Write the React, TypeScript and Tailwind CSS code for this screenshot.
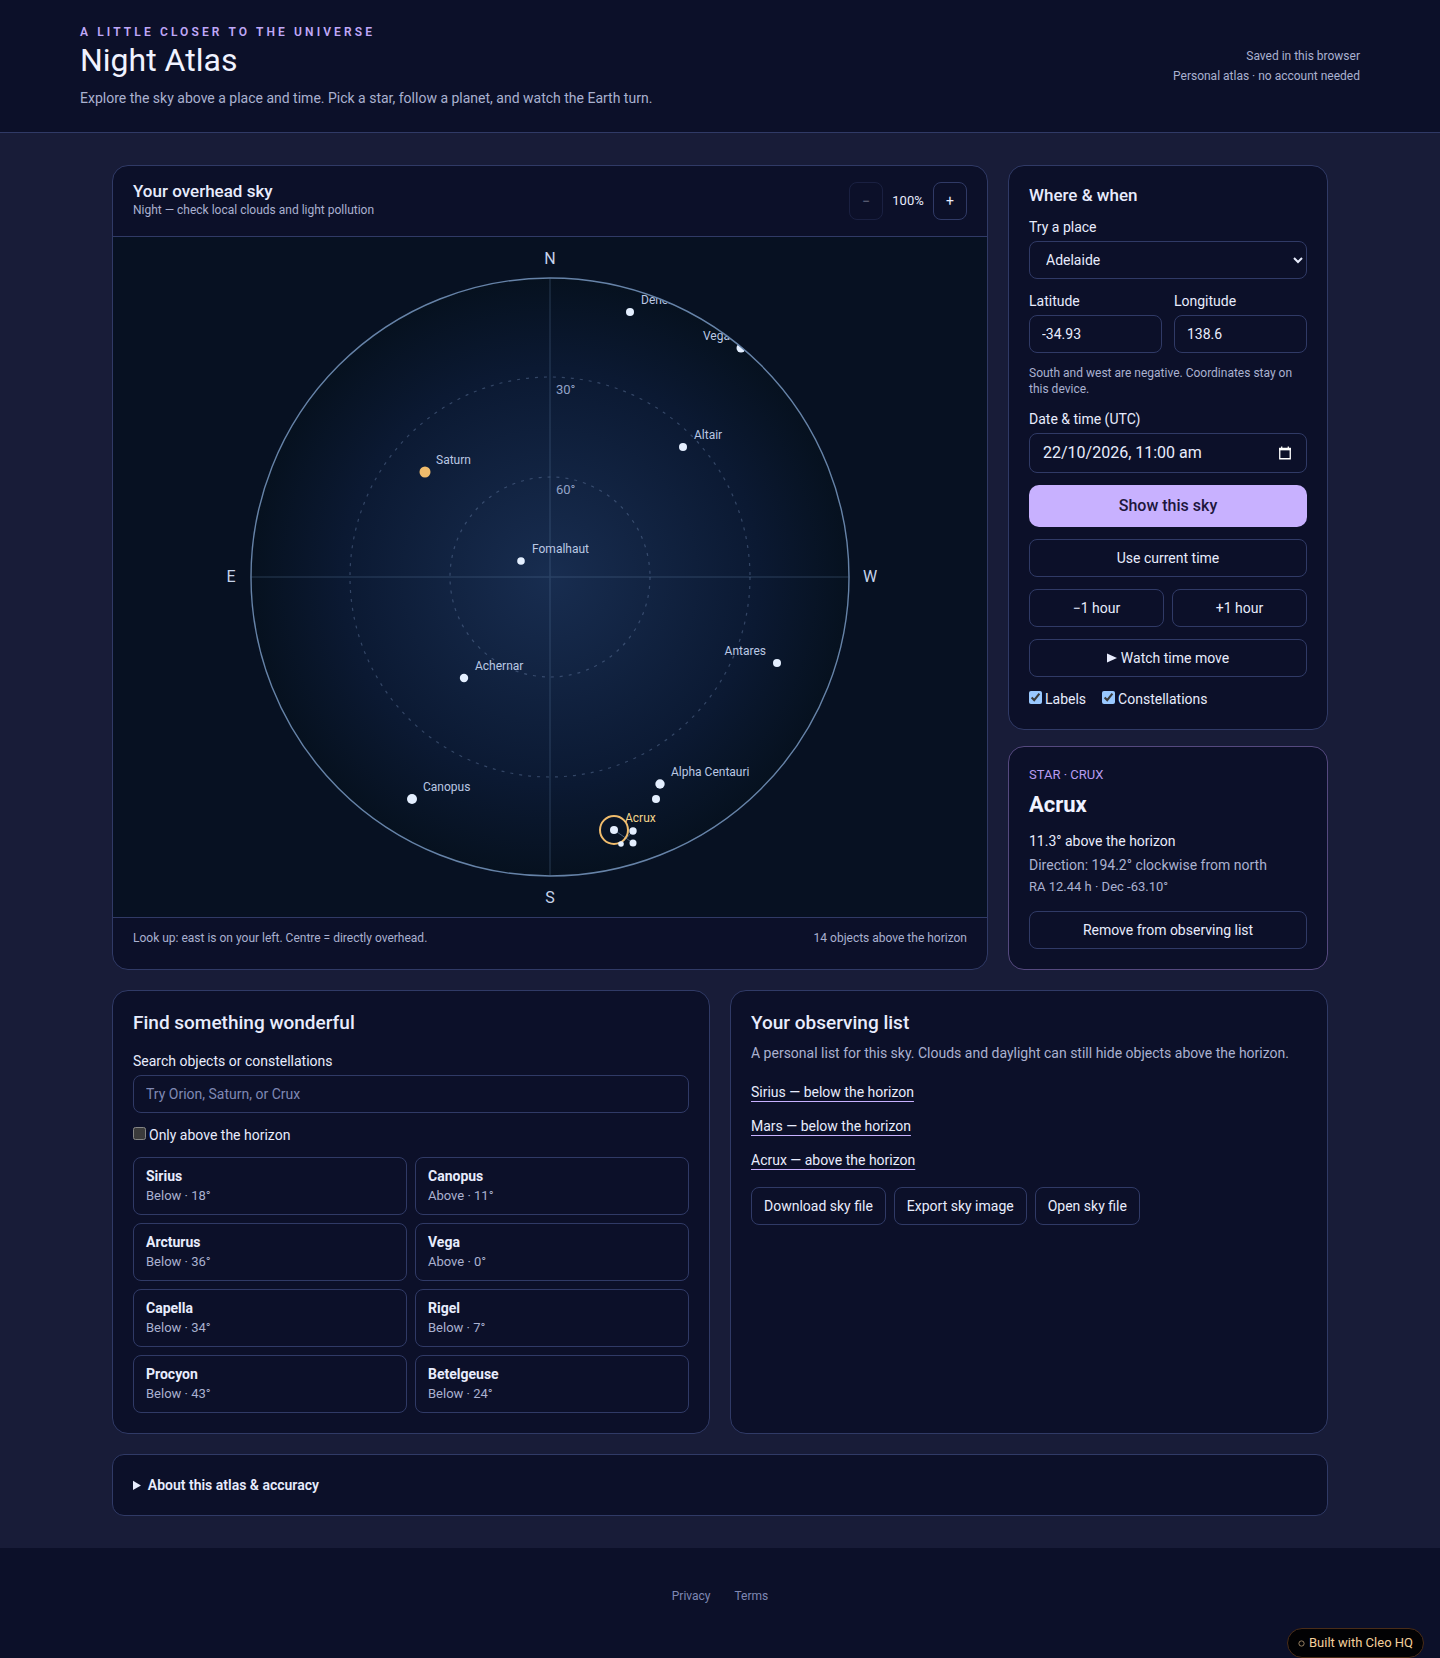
import React, { useState } from "react";

const button =
  "rounded-lg border border-[#303a66] px-3 text-[14px] leading-5 text-[#e8ecfd] h-[38px] hover:bg-[#181c38] disabled:opacity-40";
const field =
  "block w-full rounded-lg border border-[#303a66] bg-[#0c1029] px-3 leading-5 text-[#e8ecfd] [color-scheme:dark] placeholder:text-[#7f88b4]";
const card = "rounded-2xl border border-[#303a66] bg-[#0c1029]";

type Star = {
  x: number;
  y: number;
  r: number;
  name?: string;
  left?: boolean;
  planet?: boolean;
  selected?: boolean;
};

const stars: Star[] = [
  { name: "Deneb", x: 80, y: -265, r: 4 },
  { name: "Vega", x: 191, y: -229, r: 4.5, left: true },
  { name: "Altair", x: 133, y: -130, r: 4 },
  { name: "Saturn", x: -125, y: -105, r: 5.5, planet: true },
  { name: "Fomalhaut", x: -29, y: -16, r: 3.8 },
  { name: "Achernar", x: -86, y: 101, r: 4.2 },
  { name: "Antares", x: 227, y: 86, r: 4, left: true },
  { name: "Canopus", x: -138, y: 222, r: 5 },
  { name: "Alpha Centauri", x: 110, y: 207, r: 4.7 },
  { x: 106, y: 222, r: 4 },
  { name: "Acrux", x: 64, y: 253, r: 4, selected: true },
  { x: 83, y: 254, r: 3.7 },
  { x: 83, y: 266, r: 3.5 },
  { x: 71, y: 267, r: 2.8 },
];

const objects = [
  ["Sirius", "Below · 18°"],
  ["Canopus", "Above · 11°"],
  ["Arcturus", "Below · 36°"],
  ["Vega", "Above · 0°"],
  ["Capella", "Below · 34°"],
  ["Rigel", "Below · 7°"],
  ["Procyon", "Below · 43°"],
  ["Betelgeuse", "Below · 24°"],
];

function SkyChart({ labels, lines }: { labels: boolean; lines: boolean }) {
  return (
    <svg
      viewBox="-437 -340 874 680"
      className="block h-auto w-full bg-[#071122]"
      role="img"
      aria-label="Overhead sky chart"
    >
      <defs>
        <radialGradient id="sky">
          <stop offset="0" stopColor="#182d50" />
          <stop offset="0.7" stopColor="#0b1932" />
          <stop offset="1" stopColor="#06111f" />
        </radialGradient>
        <clipPath id="dome">
          <circle r="299" />
        </clipPath>
      </defs>
      <circle r="299" fill="url(#sky)" />
      <g clipPath="url(#dome)">
        <path d="M0-299V299M-299 0H299" stroke="#5d7ba3" strokeOpacity="0.26" strokeWidth="1.5" />
        <g fill="none" stroke="#6c84ac" strokeOpacity="0.42" strokeWidth="1.2" strokeDasharray="3 6">
          <circle r="200" />
          <circle r="100" />
        </g>
        <g fill="#92a3c6" fontSize="13">
          <text x="6" y="-183">30°</text>
          <text x="6" y="-83">60°</text>
        </g>
        {lines && <path d="M64 253L83 266M71 267L83 254" stroke="#6a86a8" strokeOpacity="0.65" />}
        {stars.map((s) => (
          <g key={`${s.x},${s.y}`}>
            <circle cx={s.x} cy={s.y} r={s.r} fill={s.planet ? "#f0bc6c" : "#e4efff"} />
            {s.selected && (
              <circle cx={s.x} cy={s.y} r="14" fill="none" stroke="#f0bc6c" strokeWidth="2" />
            )}
            {labels && s.name && (
              <text
                x={s.left ? s.x - 11 : s.x + 11}
                y={s.y - 8}
                textAnchor={s.left ? "end" : "start"}
                fontSize="12"
                fill={s.selected ? "#f2d48c" : "#bac8e3"}
              >
                {s.name}
              </text>
            )}
          </g>
        ))}
      </g>
      <circle r="299" fill="none" stroke="#6683a8" strokeWidth="1.4" />
      <g fill="#c5d3ea" fontSize="16" textAnchor="middle">
        <text x="0" y="-313">N</text>
        <text x="0" y="326">S</text>
        <text x="-319" y="5">E</text>
        <text x="320" y="5">W</text>
      </g>
    </svg>
  );
}

export default function App() {
  const [labels, setLabels] = useState(true);
  const [lines, setLines] = useState(true);

  return (
    <div className="min-h-screen bg-[#181c38] font-['Roboto',sans-serif] text-[14px] leading-5 text-[#e8ecfd]">
      <header className="flex items-center justify-between border-b border-[#303a66] bg-[#0c1029] px-20 py-6">
        <div>
          <p className="text-[12px] leading-4 font-semibold tracking-[0.26em] text-[#c0a8f8] uppercase">
            A little closer to the universe
          </p>
          <h1 className="text-[32px] leading-10 font-normal text-[#f0f2ff]">Night Atlas</h1>
          <p className="mt-2 text-[#aab1d0]">
            Explore the sky above a place and time. Pick a star, follow a planet, and watch the Earth turn.
          </p>
        </div>
        <div className="text-right text-[12px] leading-5 text-[#aab1d0]">
          <p>Saved in this browser</p>
          <p>Personal atlas · no account needed</p>
        </div>
      </header>

      <main className="mx-auto max-w-[1280px] space-y-5 px-8 py-8">
        <div className="grid grid-cols-[minmax(0,1fr)_320px] gap-5">
          <section className={`${card} flex flex-col overflow-hidden`}>
            <div className="flex items-center justify-between border-b border-[#303a66] px-5 py-4">
              <div>
                <h2 className="text-[17px] leading-[18px] font-medium">Your overhead sky</h2>
                <p className="text-[12px] leading-5 text-[#aab1d0]">
                  Night — check local clouds and light pollution
                </p>
              </div>
              <div className="flex items-center gap-2 text-[13px]">
                <button disabled aria-label="Zoom out" className={`${button} w-[34px]`}>
                  −
                </button>
                <span className="w-[34px] text-center">100%</span>
                <button aria-label="Zoom in" className={`${button} w-[34px]`}>
                  +
                </button>
              </div>
            </div>
            <SkyChart labels={labels} lines={lines} />
            <div className="flex flex-1 justify-between border-t border-[#303a66] px-5 pt-3 text-[12px] leading-4 text-[#aab1d0]">
              <p>Look up: east is on your left. Centre = directly overhead.</p>
              <p>14 objects above the horizon</p>
            </div>
          </section>

          <div className="flex flex-col gap-4">
            <section className={`${card} flex flex-col gap-3 p-5`}>
              <h2 className="text-[17px] leading-[19px] font-medium">Where &amp; when</h2>
              <label className="block">
                Try a place
                <select className={`${field} mt-1 h-[38px]`} defaultValue="Adelaide">
                  <option>Adelaide</option>
                  <option>Sydney</option>
                  <option>London</option>
                </select>
              </label>
              <div className="grid grid-cols-2 gap-3">
                <label className="block">
                  Latitude
                  <input className={`${field} mt-1 h-[38px]`} defaultValue="-34.93" />
                </label>
                <label className="block">
                  Longitude
                  <input className={`${field} mt-1 h-[38px]`} defaultValue="138.6" />
                </label>
              </div>
              <p className="text-[12px] leading-4 text-[#aab1d0]">
                South and west are negative. Coordinates stay on this device.
              </p>
              <div>
                <label htmlFor="when" className="block">
                  Date &amp; time (UTC)
                </label>
                <div className="mt-1 flex h-10 items-center rounded-lg border border-[#303a66] pr-[14px] pl-[13px]">
                  <input
                    id="when"
                    className="min-w-0 flex-1 bg-transparent text-[16px] leading-5 outline-none"
                    defaultValue="22/10/2026, 11:00 am"
                  />
                  <svg viewBox="0 0 14 14" className="size-[14px] fill-none stroke-white" aria-hidden="true">
                    <path d="M1.750 2.500H12.250V12.750H1.750Z" strokeWidth="1.300" />
                    <path d="M1 3.200H13" strokeWidth="2.300" />
                    <path d="M3.700 .5V3M10.300 .5V3" strokeWidth="1.300" />
                  </svg>
                </div>
              </div>
              <button className="h-[42px] rounded-[10px] bg-[#c8b1ff] text-[16px] font-medium text-[#20163c]">
                Show this sky
              </button>
              <button className={button}>Use current time</button>
              <div className="grid grid-cols-2 gap-2">
                <button className={button}>−1 hour</button>
                <button className={button}>+1 hour</button>
              </div>
              <button className={`${button} flex items-center justify-center gap-1`}>
                <svg viewBox="0 0 10 10" className="size-2.5 fill-current" aria-hidden="true">
                  <path d="M0 .5L10 5L0 9.500Z" />
                </svg>
                Watch time move
              </button>
              <div className="flex gap-4">
                <label className="flex items-start gap-[3px]">
                  <input
                    type="checkbox"
                    className="mt-[2px] size-[13px] [color-scheme:dark]"
                    checked={labels}
                    onChange={(e) => setLabels(e.target.checked)}
                  />
                  Labels
                </label>
                <label className="flex items-start gap-[3px]">
                  <input
                    type="checkbox"
                    className="mt-[2px] size-[13px] [color-scheme:dark]"
                    checked={lines}
                    onChange={(e) => setLines(e.target.checked)}
                  />
                  Constellations
                </label>
              </div>
            </section>

            <section className="rounded-2xl border border-[#55497f] bg-[#0c1029] p-5">
              <p className="text-[13px] leading-4 text-[#b79cf0] uppercase">Star · Crux</p>
              <h2 className="mt-2 text-[22px] leading-7 font-bold text-[#f0f2ff]">Acrux</h2>
              <p className="mt-3">11.3° above the horizon</p>
              <p className="mt-1 text-[#aab1d0]">Direction: 194.2° clockwise from north</p>
              <p className="mt-1 text-[13px] leading-4 text-[#aab1d0]">RA 12.44 h · Dec -63.10°</p>
              <button className={`${button} mt-4 w-full`}>Remove from observing list</button>
            </section>
          </div>
        </div>

        <div className="grid grid-cols-2 gap-5">
          <section className={`${card} p-5`}>
            <h2 className="text-[19px] leading-6 font-medium">Find something wonderful</h2>
            <label className="mt-4 block">
              Search objects or constellations
              <input className={`${field} mt-1 h-[38px]`} placeholder="Try Orion, Saturn, or Crux" />
            </label>
            <label className="mt-3 flex items-start gap-[3px]">
              <input type="checkbox" className="mt-[2px] size-[13px] [color-scheme:dark]" />
              Only above the horizon
            </label>
            <div className="mt-3 grid grid-cols-2 gap-2">
              {objects.map(([name, place]) => (
                <button
                  key={name}
                  className="rounded-lg border border-[#303a66] px-3 py-2 text-left hover:bg-[#181c38]"
                >
                  <span className="block font-bold">{name}</span>
                  <span className="block text-[13px] text-[#aab1d0]">{place}</span>
                </button>
              ))}
            </div>
          </section>

          <section className={`${card} p-5`}>
            <h2 className="text-[19px] leading-6 font-medium">Your observing list</h2>
            <p className="mt-2 text-[#aab1d0]">
              A personal list for this sky. Clouds and daylight can still hide objects above the horizon.
            </p>
            <ul className="mt-[18px] space-y-3 leading-[22px]">
              {["Sirius — below the horizon", "Mars — below the horizon", "Acrux — above the horizon"].map((t) => (
                <li key={t}>
                  <button className="underline decoration-[#c8b1ff] decoration-1 underline-offset-4">{t}</button>
                </li>
              ))}
            </ul>
            <div className="mt-4 flex flex-wrap gap-2">
              <button className={button}>Download sky file</button>
              <button className={button}>Export sky image</button>
              <button className={button}>Open sky file</button>
            </div>
          </section>
        </div>

        <details className="rounded-xl border border-[#303a66] bg-[#0c1029] p-5">
          <summary className="cursor-pointer font-semibold">About this atlas &amp; accuracy</summary>
          <p className="mt-3 text-[#aab1d0]">Positions are approximate and meant for casual stargazing.</p>
        </details>
      </main>

      <footer className="flex justify-center gap-6 bg-[#0c1029] pt-10 pb-[54px] text-[12px] leading-4 text-[#7f88b4]">
        <a href="#privacy">Privacy</a>
        <a href="#terms">Terms</a>
      </footer>

      <a
        href="#cleo"
        className="fixed right-4 bottom-0 flex h-[30px] items-center gap-1 rounded-full border border-[#4a2d18] bg-[#020204] px-[10px] text-[13px] text-[#f3cf9b]"
      >
        <svg viewBox="0 0 8 8" className="size-[7px] fill-none stroke-current opacity-70" aria-hidden="true">
          <circle cx="4" cy="4" r="3" />
        </svg>
        Built with Cleo HQ
      </a>
    </div>
  );
}
